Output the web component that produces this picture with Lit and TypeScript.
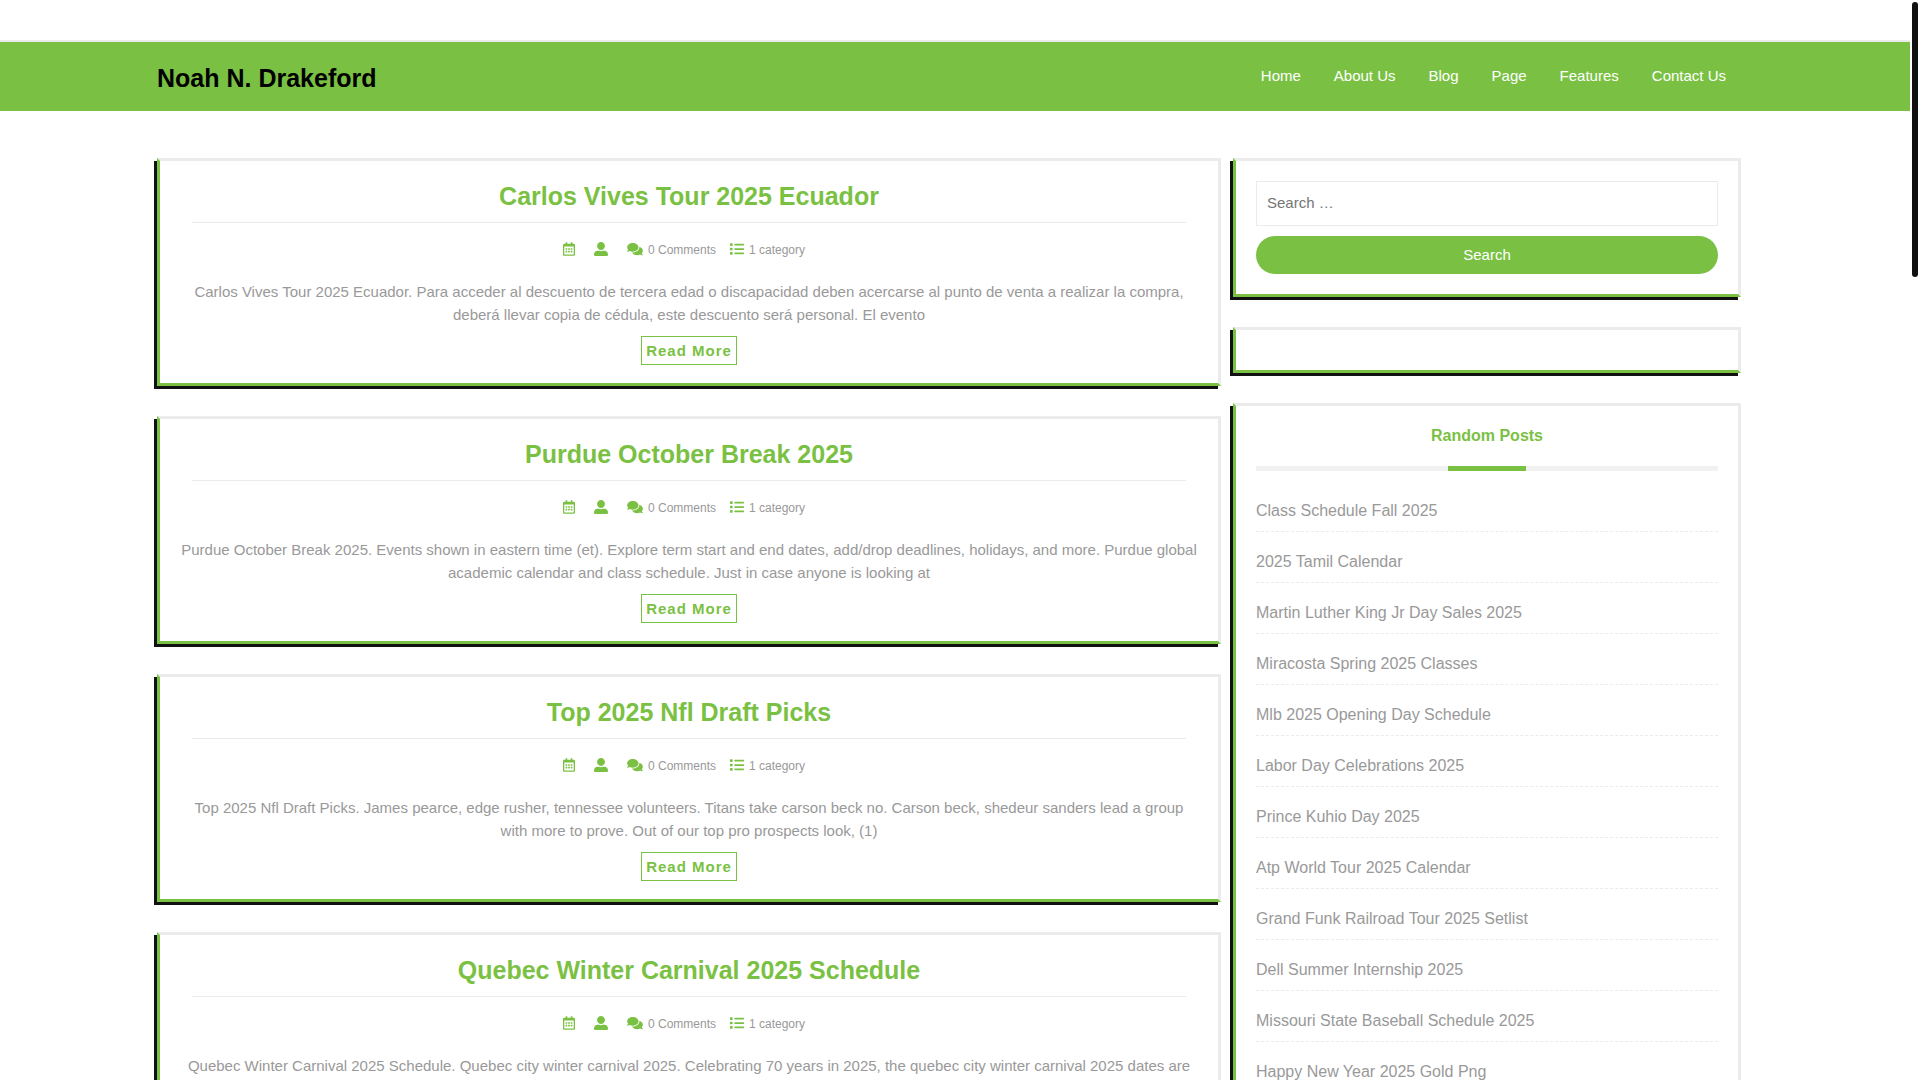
import { LitElement, html, css, svg } from "lit";
import { customElement } from "lit/decorators.js";

interface Post {
  title: string;
  excerpt: string;
}

const NAV = ["Home", "About Us", "Blog", "Page", "Features", "Contact Us"];

const POSTS: Post[] = [
  {
    title: "Carlos Vives Tour 2025 Ecuador",
    excerpt:
      "Carlos Vives Tour 2025 Ecuador. Para acceder al descuento de tercera edad o discapacidad deben acercarse al punto de venta a realizar la compra, deberá llevar copia de cédula, este descuento será personal. El evento",
  },
  {
    title: "Purdue October Break 2025",
    excerpt:
      "Purdue October Break 2025. Events shown in eastern time (et). Explore term start and end dates, add/drop deadlines, holidays, and more. Purdue global academic calendar and class schedule. Just in case anyone is looking at",
  },
  {
    title: "Top 2025 Nfl Draft Picks",
    excerpt:
      "Top 2025 Nfl Draft Picks. James pearce, edge rusher, tennessee volunteers. Titans take carson beck no. Carson beck, shedeur sanders lead a group with more to prove. Out of our top pro prospects look, (1)",
  },
  {
    title: "Quebec Winter Carnival 2025 Schedule",
    excerpt:
      "Quebec Winter Carnival 2025 Schedule. Quebec city winter carnival 2025. Celebrating 70 years in 2025, the quebec city winter carnival 2025 dates are",
  },
];

const RANDOM = [
  "Class Schedule Fall 2025",
  "2025 Tamil Calendar",
  "Martin Luther King Jr Day Sales 2025",
  "Miracosta Spring 2025 Classes",
  "Mlb 2025 Opening Day Schedule",
  "Labor Day Celebrations 2025",
  "Prince Kuhio Day 2025",
  "Atp World Tour 2025 Calendar",
  "Grand Funk Railroad Tour 2025 Setlist",
  "Dell Summer Internship 2025",
  "Missouri State Baseball Schedule 2025",
  "Happy New Year 2025 Gold Png",
];

const calendar = svg`<path d="M148 288h-40c-6.600 0-12-5.400-12-12v-40c0-6.600 5.400-12 12-12h40c6.600 0 12 5.400 12 12v40c0 6.600-5.400 12-12 12zm108-12v-40c0-6.600-5.400-12-12-12h-40c-6.600 0-12 5.400-12 12v40c0 6.600 5.400 12 12 12h40c6.600 0 12-5.400 12-12zm96 0v-40c0-6.600-5.400-12-12-12h-40c-6.600 0-12 5.400-12 12v40c0 6.600 5.400 12 12 12h40c6.600 0 12-5.400 12-12zm-96 96v-40c0-6.600-5.400-12-12-12h-40c-6.600 0-12 5.400-12 12v40c0 6.600 5.400 12 12 12h40c6.600 0 12-5.400 12-12zm-96 0v-40c0-6.600-5.400-12-12-12h-40c-6.600 0-12 5.400-12 12v40c0 6.600 5.400 12 12 12h40c6.600 0 12-5.400 12-12zm192 0v-40c0-6.600-5.400-12-12-12h-40c-6.600 0-12 5.400-12 12v40c0 6.600 5.400 12 12 12h40c6.600 0 12-5.400 12-12zm96-260v352c0 26.500-21.500 48-48 48H48c-26.500 0-48-21.500-48-48V112c0-26.500 21.500-48 48-48h48V12c0-6.600 5.400-12 12-12h40c6.600 0 12 5.400 12 12v52h128V12c0-6.600 5.400-12 12-12h40c6.600 0 12 5.400 12 12v52h48c26.500 0 48 21.500 48 48zm-48 346V160H48v298c0 3.300 2.700 6 6 6h340c3.300 0 6-2.700 6-6z"/>`;
const user = svg`<path d="M256 288c79.500 0 144-64.500 144-144S335.500 0 256 0 112 64.500 112 144s64.500 144 144 144zm128 32h-55.100c-22.200 10.200-46.900 16-72.900 16s-50.600-5.800-72.900-16H128C57.300 320 0 377.300 0 448v16c0 26.500 21.500 48 48 48h416c26.500 0 48-21.500 48-48v-16c0-70.700-57.300-128-128-128z"/>`;
const comments = svg`<path d="M416 192c0-88.400-93.100-160-208-160S0 103.600 0 192c0 34.300 14.100 65.900 38 92-13.400 30.200-35.500 54.200-35.800 54.500-2.200 2.300-2.800 5.700-1.500 8.700S4.800 352 8 352c36.600 0 66.900-12.300 88.700-25 32.200 15.700 70.300 25 111.300 25 114.900 0 208-71.600 208-160zm122 220c23.900-26 38-57.700 38-92 0-66.900-53.500-124.200-129.300-148.100.9 6.600 1.300 13.300 1.300 20.100 0 105.900-107.700 192-240 192-10.800 0-21.300-.8-31.700-1.900C207.800 439.600 281.800 480 368 480c41 0 79.100-9.200 111.300-25 21.800 12.700 52.100 25 88.700 25 3.200 0 6.100-1.900 7.300-4.800 1.300-2.900.7-6.300-1.500-8.700-.3-.3-22.400-24.200-35.800-54.500z"/>`;
const list = svg`<path d="M80 368H16a16 16 0 0 0-16 16v64a16 16 0 0 0 16 16h64a16 16 0 0 0 16-16v-64a16 16 0 0 0-16-16zm0-320H16A16 16 0 0 0 0 64v64a16 16 0 0 0 16 16h64a16 16 0 0 0 16-16V64a16 16 0 0 0-16-16zm0 160H16a16 16 0 0 0-16 16v64a16 16 0 0 0 16 16h64a16 16 0 0 0 16-16v-64a16 16 0 0 0-16-16zm416 176H176a16 16 0 0 0-16 16v32a16 16 0 0 0 16 16h320a16 16 0 0 0 16-16v-32a16 16 0 0 0-16-16zm0-320H176a16 16 0 0 0-16 16v32a16 16 0 0 0 16 16h320a16 16 0 0 0 16-16V80a16 16 0 0 0-16-16zm0 160H176a16 16 0 0 0-16 16v32a16 16 0 0 0 16 16h320a16 16 0 0 0 16-16v-32a16 16 0 0 0-16-16z"/>`;

const icon = (width: number, units: number, shape: unknown) => html`<svg
  class="icon"
  width=${width}
  height="14"
  viewBox="0 0 ${units} 512"
  aria-hidden="true"
>${shape}</svg>`;

@customElement("app-root")
export class AppRoot extends LitElement {
  static styles = css`
    :host {
      --green: #7ac143;
      --line: #ebebeb;
      --ink: #111;
      display: flex;
      height: 100vh;
      overflow: hidden;
      background: #fff;
      color: #999;
      font: 15px/22px "Liberation Sans", Arial, sans-serif;
    }
    * { box-sizing: border-box; }
    a { color: inherit; text-decoration: none; }
    h1, h2, h3, p, ul { margin: 0; padding: 0; }
    ul { list-style: none; }
    .page { flex: 1; min-width: 0; }
    .track { flex: none; width: 10px; padding: 2px 2px 0; }
    .thumb { height: 275px; border-radius: 3px; background: var(--ink); }
    .container { max-width: 1596px; margin: 0 auto; padding-right: 12px; }
    .masthead {
      margin-top: 40px;
      border-top: 2px solid var(--line);
      background: var(--green);
    }
    .bar { display: flex; justify-content: space-between; align-items: center; height: 69px; }
    .brand { font-size: 25px; line-height: 30px; padding-top: 2px; color: #000; }
    .menu { display: flex; gap: 33px; padding: 0 15px 2px 0; color: #fff; }
    .columns {
      display: grid;
      grid-template-columns: 1064fr 508fr;
      gap: 12px;
      align-items: start;
      padding-top: 47px;
    }
    .stack { display: grid; gap: 30px; }
    .card {
      border: 3px solid var(--line);
      border-left-color: var(--green);
      border-bottom-color: var(--green);
      box-shadow: -3px 3px 0 var(--ink);
    }
    .post { padding: 20px 20px 18px; text-align: center; }
    .title {
      margin: 0 12px;
      padding-bottom: 11px;
      border-bottom: 1px solid var(--line);
      font-size: 25px;
      line-height: 30px;
      color: var(--green);
    }
    .meta {
      display: flex;
      justify-content: center;
      align-items: center;
      margin: 16px 0 19px;
      font-size: 12px;
      line-height: 22px;
    }
    .icon { flex: none; margin-bottom: 2px; fill: var(--green); }
    .item { display: flex; align-items: center; gap: 5px; margin-right: 14px; }
    .item.bare { margin-right: 19px; }
    .item:last-child { margin-right: 10px; }
    .excerpt { line-height: 23px; }
    .more {
      display: inline-block;
      margin-top: 10px;
      padding: 2px 4px;
      border: 1px solid var(--green);
      font-weight: bold;
      line-height: 23px;
      letter-spacing: 1px;
      color: var(--green);
    }
    .widget { padding: 20px; }
    .search { display: grid; gap: 10px; }
    .field, .submit { width: 100%; font: inherit; }
    .field { height: 45px; padding: 0 10px 2px; border: 1px solid var(--line); background: #fff; }
    .field::placeholder { color: #757575; }
    .submit { height: 38px; padding: 0 0 1px; border: 0; border-radius: 20px; background: var(--green); color: #fff; }
    .heading {
      font-size: 16px;
      line-height: 20px;
      text-align: center;
      color: var(--green);
    }
    .rule { height: 5px; margin: 20px 0 10px; background: #f1f1f1; }
    .rule::after {
      content: "";
      display: block;
      width: 17%;
      height: 5px;
      margin: 0 auto;
      background: var(--green);
    }
    .links { font-size: 16px; line-height: 24px; }
    .entry { padding: 18px 0 8px; border-bottom: 1px dashed var(--line); }
  `;

  private renderPost(post: Post) {
    return html`
      <article class="card post">
        <h2 class="title"><a href="#">${post.title}</a></h2>
        <div class="meta">
          <span class="item bare">${icon(12, 448, calendar)}</span>
          <span class="item bare">${icon(14, 512, user)}</span>
          <span class="item">${icon(16, 576, comments)}0 Comments</span>
          <span class="item">${icon(14, 512, list)}1 category</span>
        </div>
        <p class="excerpt">${post.excerpt}</p>
        <a class="more" href="#">Read More</a>
      </article>
    `;
  }

  render() {
    return html`
      <div class="page">
        <header class="masthead">
          <div class="container bar">
            <h1 class="brand"><a href="#">Noah N. Drakeford</a></h1>
            <nav><ul class="menu">${NAV.map((n) => html`<li><a href="#">${n}</a></li>`)}</ul></nav>
          </div>
        </header>
        <div class="container columns">
          <main class="stack">${POSTS.map((p) => this.renderPost(p))}</main>
          <aside class="stack">
            <section class="card widget">
              <form class="search" @submit=${(e: Event) => e.preventDefault()}>
                <input class="field" type="search" placeholder="Search …" aria-label="Search" />
                <button class="submit" type="submit">Search</button>
              </form>
            </section>
            <section class="card widget"></section>
            <section class="card widget">
              <h3 class="heading">Random Posts</h3>
              <div class="rule"></div>
              <ul class="links">
                ${RANDOM.map((r) => html`<li class="entry"><a href="#">${r}</a></li>`)}
              </ul>
            </section>
          </aside>
        </div>
      </div>
      <div class="track"><div class="thumb"></div></div>
    `;
  }
}
